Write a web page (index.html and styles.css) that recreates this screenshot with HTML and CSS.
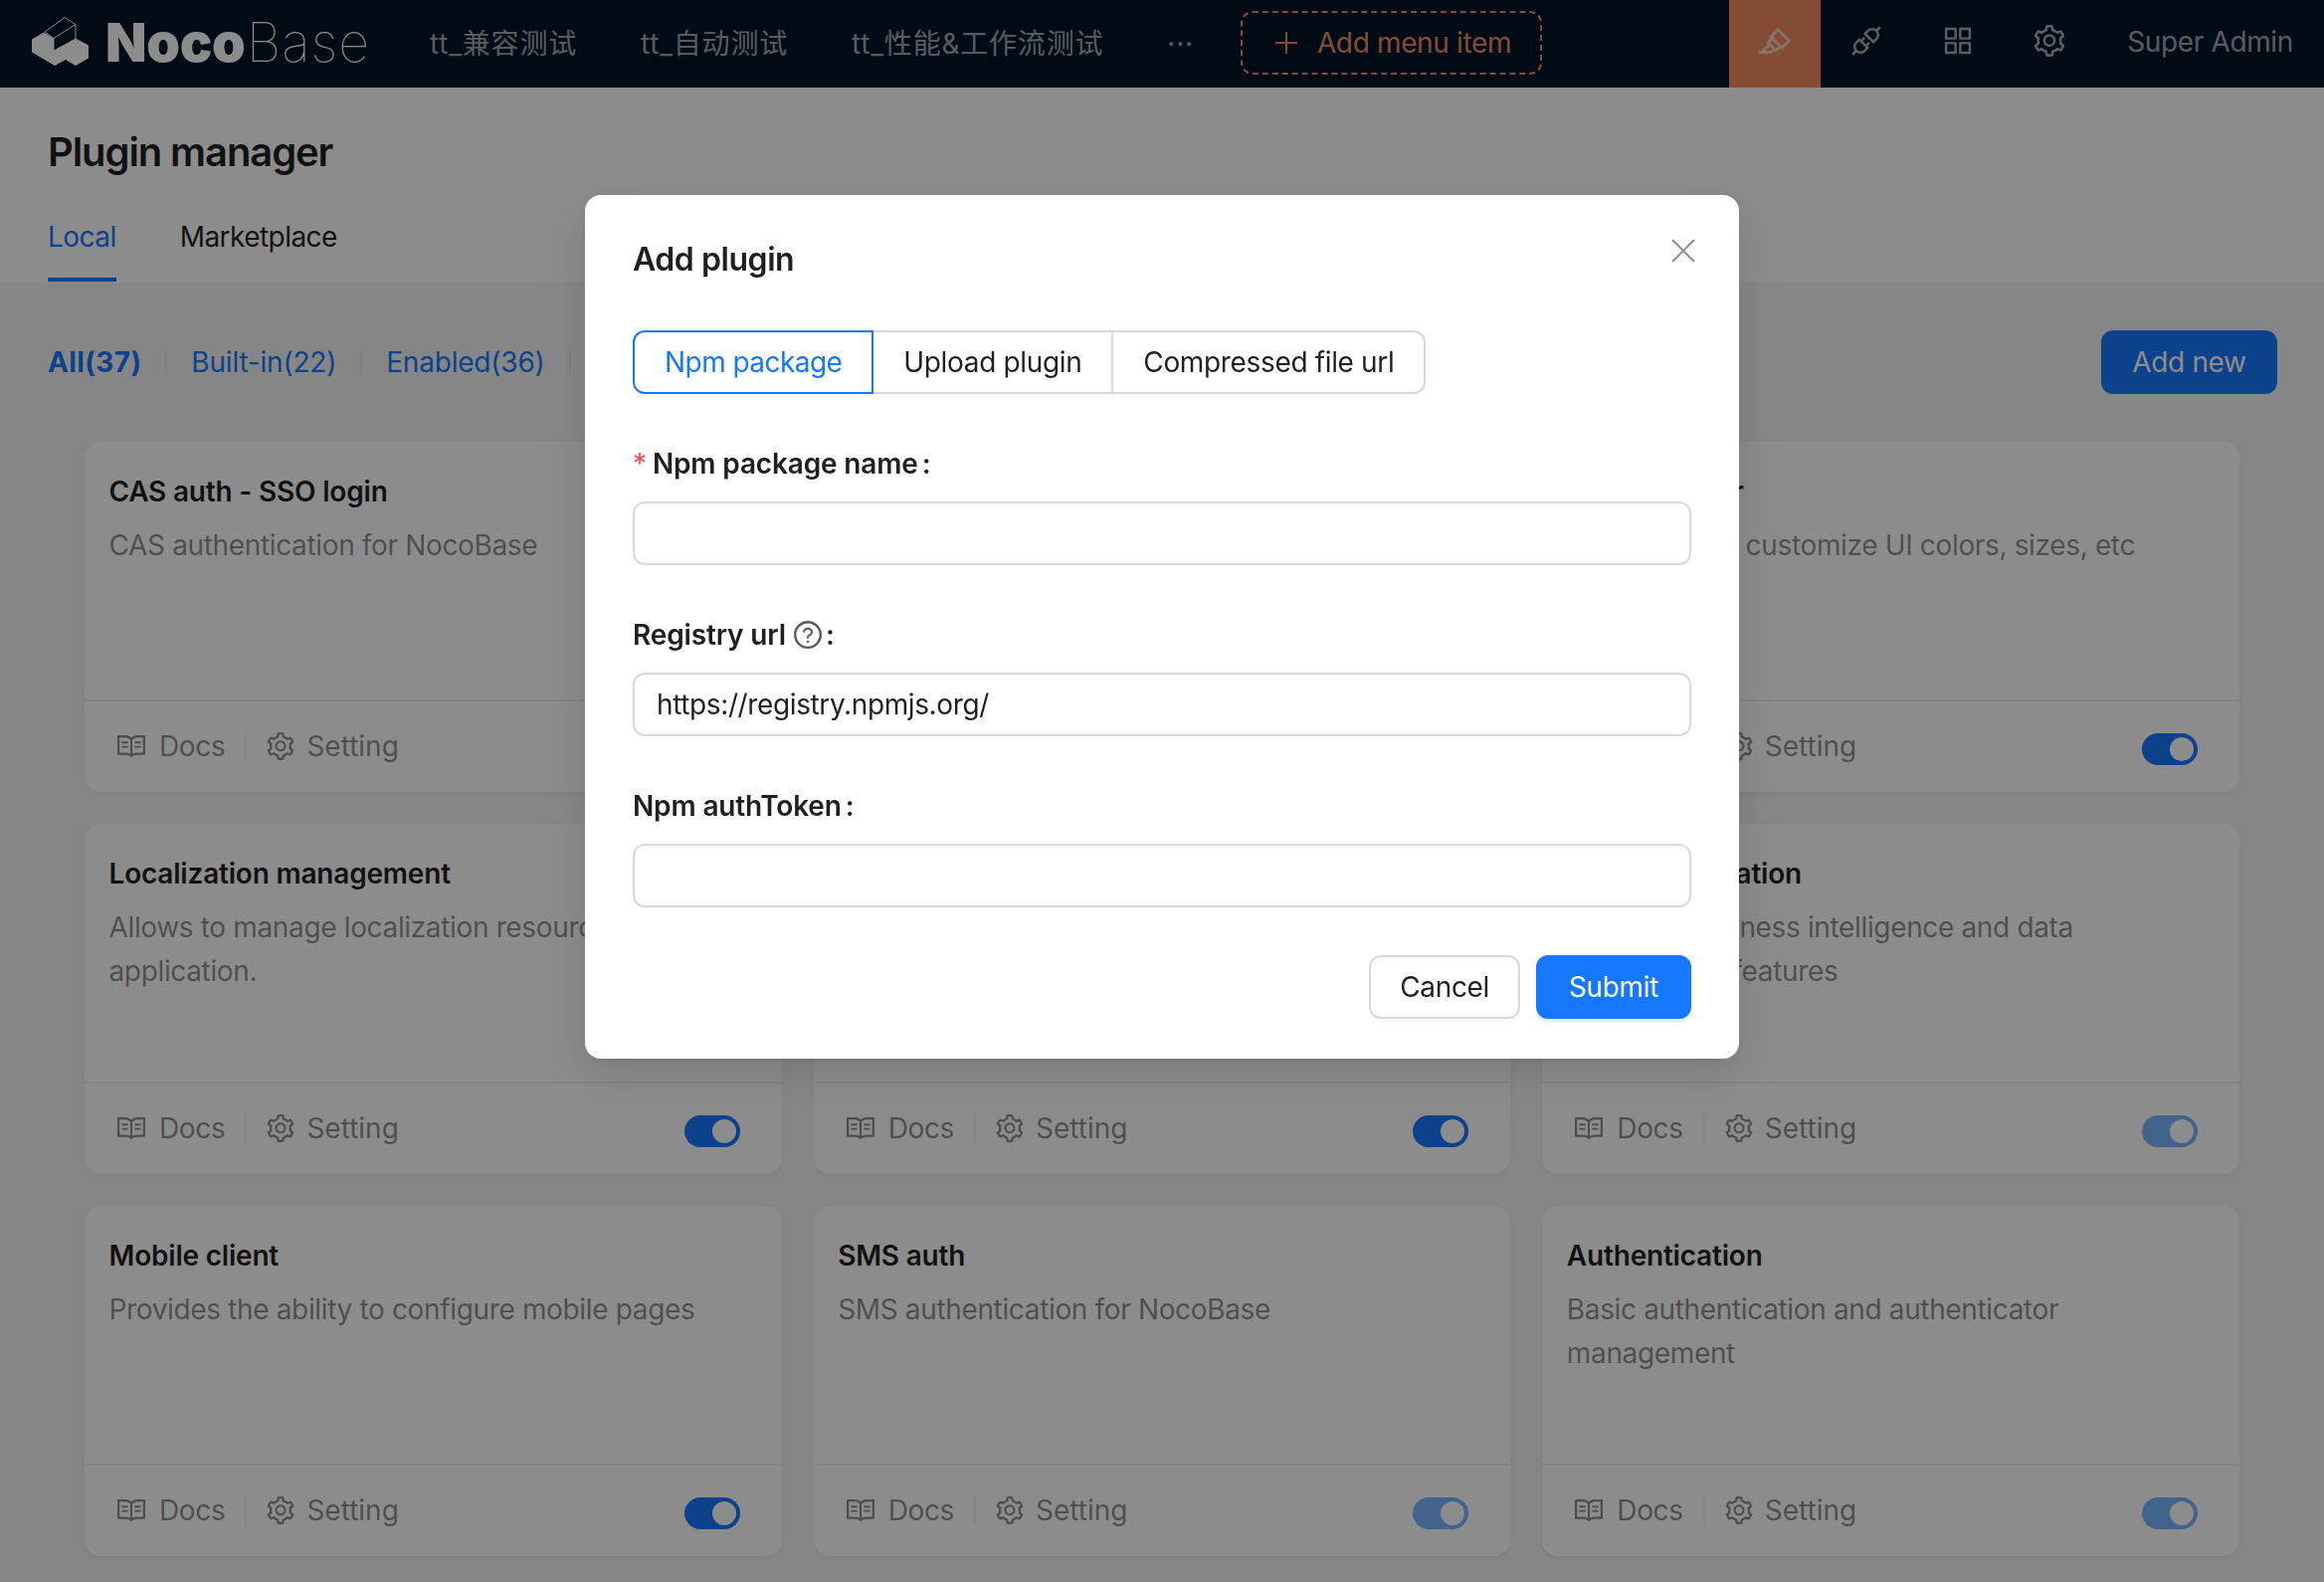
FILE: index.html
```html
<!DOCTYPE html>
<html lang="en">
<head>
  <meta charset="UTF-8" />
  <title>Plugin manager</title>
  <link rel="stylesheet" href="styles.css">
</head>
<body>
  <!-- Shared icons -->
  <svg class="sprite" xmlns="http://www.w3.org/2000/svg">
    <symbol id="i-read" viewBox="64 64 896 896"><path d="M928 161H699.2c-49.1 0-97.1 14.1-138.4 40.7L512 233l-48.8-31.3A255.2 255.2 0 0 0 324.8 161H96c-17.7 0-32 14.3-32 32v568c0 17.7 14.3 32 32 32h228.8c49.1 0 97.1 14.1 138.4 40.7l44.4 28.6c1.3.8 2.8 1.3 4.3 1.3s3-.4 4.3-1.3l44.4-28.6C602 807.1 650.1 793 699.2 793H928c17.7 0 32-14.3 32-32V193c0-17.7-14.3-32-32-32zM324.8 721H136V233h188.8c35.4 0 69.8 10.1 99.5 29.2l48.8 31.3 6.9 4.5v462c-47.6-25.6-100.8-39-155.2-39zm563.2 0H699.2c-54.4 0-107.6 13.4-155.2 39V298l6.9-4.5 48.8-31.3c29.7-19.1 64.1-29.2 99.5-29.2H888v488zM396.9 361H211.1c-3.9 0-7.1 3.4-7.1 7.5v45c0 4.1 3.2 7.5 7.1 7.5h185.7c3.9 0 7.1-3.4 7.1-7.5v-45c.1-4.1-3.1-7.5-7-7.5zm223.1 7.5v45c0 4.1 3.2 7.5 7.1 7.5h185.7c3.9 0 7.1-3.4 7.1-7.5v-45c0-4.1-3.2-7.5-7.1-7.5H627.1c-3.9 0-7.1 3.4-7.1 7.5zM396.9 501H211.1c-3.9 0-7.1 3.4-7.1 7.5v45c0 4.1 3.2 7.5 7.1 7.5h185.7c3.9 0 7.1-3.4 7.1-7.5v-45c.1-4.1-3.1-7.5-7-7.5zm416 0H627.1c-3.9 0-7.1 3.4-7.1 7.5v45c0 4.1 3.2 7.5 7.1 7.5h185.7c3.9 0 7.1-3.4 7.1-7.5v-45c.1-4.1-3.1-7.5-7-7.5z"/></symbol>
    <symbol id="i-setting" viewBox="64 64 896 896"><path d="M924.8 625.7l-65.5-56c3.1-19 4.7-38.4 4.7-57.8s-1.6-38.8-4.7-57.8l65.5-56a32.03 32.03 0 0 0 9.3-35.2l-.9-2.6a443.74 443.74 0 0 0-79.7-137.9l-1.8-2.1a32.12 32.12 0 0 0-35.1-9.5l-81.3 28.9c-30-24.6-63.5-44-99.7-57.6l-15.7-85a32.05 32.05 0 0 0-25.8-25.7l-2.7-.5c-52.1-9.4-106.9-9.4-159 0l-2.7.5a32.05 32.05 0 0 0-25.8 25.7l-15.8 85.4a351.86 351.86 0 0 0-99 57.4l-81.9-29.1a32 32 0 0 0-35.1 9.5l-1.8 2.1a446.02 446.02 0 0 0-79.7 137.9l-.9 2.6c-4.5 12.5-.8 26.5 9.3 35.2l66.3 56.6c-3.1 18.8-4.6 38-4.6 57.1 0 19.2 1.5 38.4 4.6 57.1L99 625.5a32.03 32.03 0 0 0-9.3 35.2l.9 2.6c18.1 50.4 44.9 96.9 79.7 137.9l1.8 2.1a32.12 32.12 0 0 0 35.1 9.5l81.9-29.1c29.8 24.5 63.1 43.9 99 57.4l15.8 85.4a32.05 32.05 0 0 0 25.8 25.7l2.7.5a449.4 449.4 0 0 0 159 0l2.7-.5a32.05 32.05 0 0 0 25.8-25.7l15.7-85a350 350 0 0 0 99.7-57.6l81.3 28.9a32 32 0 0 0 35.1-9.5l1.8-2.1c34.8-41.1 61.6-87.5 79.7-137.9l.9-2.6c4.5-12.3.8-26.3-9.3-35zM788.3 465.9c2.5 15.1 3.8 30.6 3.8 46.1s-1.3 31-3.8 46.1l-6.6 40.1 74.7 63.9a370.03 370.03 0 0 1-42.6 73.6L721 702.8l-31.4 25.8c-23.9 19.6-50.5 35-79.3 45.8l-38.1 14.3-17.9 97a377.5 377.5 0 0 1-85 0l-17.9-97.2-37.8-14.5c-28.5-10.8-55-26.2-78.7-45.7l-31.4-25.9-93.4 33.2c-17-22.9-31.2-47.6-42.6-73.6l75.5-64.5-6.5-40c-2.4-14.9-3.7-30.3-3.7-45.5 0-15.3 1.2-30.6 3.7-45.5l6.5-40-75.5-64.5c11.3-26.1 25.6-50.7 42.6-73.6l93.4 33.2 31.4-25.9c23.7-19.5 50.2-34.9 78.7-45.7l37.9-14.3 17.9-97.2c28.1-3.2 56.8-3.2 85 0l17.9 97 38.1 14.3c28.7 10.8 55.4 26.2 79.3 45.8l31.4 25.8 92.8-32.9c17 22.9 31.2 47.6 42.6 73.6L781.8 426l6.5 39.9zM512 326c-97.2 0-176 78.8-176 176s78.8 176 176 176 176-78.8 176-176-78.8-176-176-176zm79.2 255.2A111.6 111.6 0 0 1 512 614c-29.9 0-58-11.7-79.2-32.8A111.6 111.6 0 0 1 400 502c0-29.9 11.7-58 32.8-79.2C454 401.6 482.1 390 512 390c29.9 0 58 11.6 79.2 32.8A111.6 111.6 0 0 1 624 502c0 29.9-11.7 58-32.8 79.2z"/></symbol>
    <symbol id="i-api" viewBox="64 64 896 896"><path d="M917.7 148.8l-42.4-42.4c-1.6-1.6-3.6-2.3-5.7-2.3s-4.1.8-5.7 2.3l-76.1 76.1a199.27 199.27 0 0 0-112.1-34.3c-51.2 0-102.4 19.5-141.5 58.6L432.3 308.7a8.03 8.03 0 0 0 0 11.3L704 591.7c1.6 1.6 3.6 2.3 5.7 2.3 2 0 4.1-.8 5.7-2.3l101.9-101.9c68.9-69 77-175.7 24.3-253.5l76.1-76.1c3.1-3.2 3.1-8.3 0-11.4zM769.1 441.7l-59.4 59.4-186.8-186.8 59.4-59.4c24.9-24.9 58.1-38.7 93.4-38.7 35.3 0 68.4 13.7 93.4 38.7 24.9 24.9 38.7 58.1 38.7 93.4 0 35.3-13.8 68.4-38.7 93.4zm-190.2 105a8.03 8.03 0 0 0-11.3 0L501 613.3 410.7 523l66.7-66.7c3.1-3.1 3.1-8.2 0-11.3L441 408.6a8.03 8.03 0 0 0-11.3 0L363 475.3l-43-43a7.85 7.85 0 0 0-5.7-2.3c-2 0-4.1.8-5.7 2.3L206.8 534.2c-68.9 69-77 175.7-24.3 253.5l-76.1 76.1a8.03 8.03 0 0 0 0 11.3l42.4 42.4c1.6 1.6 3.6 2.3 5.7 2.3s4.1-.8 5.7-2.3l76.1-76.1c33.7 22.9 72.9 34.3 112.1 34.3 51.2 0 102.4-19.5 141.5-58.6l101.9-101.9c3.1-3.1 3.1-8.2 0-11.3l-43-43 66.7-66.7c3.1-3.1 3.1-8.2 0-11.3l-36.6-36.2zM441.7 769.1a131.32 131.32 0 0 1-93.4 38.7c-35.3 0-68.4-13.7-93.4-38.7a131.32 131.32 0 0 1-38.7-93.4c0-35.3 13.7-68.4 38.7-93.4l59.4-59.4 186.8 186.8-59.4 59.4z"/></symbol>
    <symbol id="i-apps" viewBox="64 64 896 896"><path d="M464 144H160c-8.8 0-16 7.2-16 16v304c0 8.8 7.2 16 16 16h304c8.8 0 16-7.2 16-16V160c0-8.8-7.2-16-16-16zm-52 268H212V212h200v200zm452-268H560c-8.8 0-16 7.2-16 16v304c0 8.8 7.2 16 16 16h304c8.8 0 16-7.2 16-16V160c0-8.8-7.2-16-16-16zm-52 268H612V212h200v200zM464 544H160c-8.8 0-16 7.2-16 16v304c0 8.8 7.2 16 16 16h304c8.8 0 16-7.2 16-16V560c0-8.8-7.2-16-16-16zm-52 268H212V612h200v200zm452-268H560c-8.8 0-16 7.2-16 16v304c0 8.8 7.2 16 16 16h304c8.8 0 16-7.2 16-16V560c0-8.8-7.2-16-16-16zm-52 268H612V612h200v200z"/></symbol>
    <symbol id="i-highlight" viewBox="64 64 896 896"><path d="M957.6 507.4L603.2 158.2a7.9 7.9 0 0 0-11.2 0L353.3 393.4a8.03 8.03 0 0 0-.1 11.3l.1.1 40 39.4-117.2 115.3a8.03 8.03 0 0 0-.1 11.3l.1.1 39.5 38.9-189.1 187H72.1c-4.4 0-8.1 3.6-8.1 8V860c0 4.4 3.6 8 8 8h344.9c2.1 0 4.1-.8 5.6-2.3l76.1-75.6 40.4 39.8a7.9 7.9 0 0 0 11.2 0l117.1-115.6 40.1 39.5a7.9 7.9 0 0 0 11.2 0l238.7-235.2c3.4-3 3.4-8 .3-11.2zM389.8 796.2H229.6l134.4-133 80.1 78.9-54.3 54.1zm154.8-62.1L373.2 565.2l68.6-67.5 171.4 168.9-68.6 67.5zM713.1 658L450.3 399.1 597.6 254l262.8 259-147.3 145z"/></symbol>
    <symbol id="i-question" viewBox="64 64 896 896"><path d="M512 64C264.6 64 64 264.6 64 512s200.6 448 448 448 448-200.6 448-448S759.4 64 512 64zm0 820c-205.4 0-372-166.6-372-372s166.6-372 372-372 372 166.6 372 372-166.6 372-372 372z"/><path d="M623.6 316.7C593.6 290.4 554 276 512 276s-81.6 14.5-111.6 40.7C369.2 344 352 380.7 352 420v7.6c0 4.4 3.6 8 8 8h48c4.4 0 8-3.6 8-8V420c0-44.1 43.1-80 96-80s96 35.9 96 80c0 31.1-22 59.6-56.1 72.7-21.2 8.1-39.2 22.3-52.1 40.9-13.1 19-19.9 41.8-19.9 64.9V620c0 4.4 3.6 8 8 8h48c4.4 0 8-3.6 8-8v-22.7a48.3 48.3 0 0 1 30.9-44.8c59-22.7 97.1-74.7 97.1-132.5.1-39.3-17.1-76-48.3-103.3zM472 732a40 40 0 1 0 80 0 40 40 0 1 0-80 0z"/></symbol>
  </svg>

  <!-- Top bar -->
  <header class="topbar">
    <div class="logo">
      <svg class="logo-mark" viewBox="0 0 60 52" xmlns="http://www.w3.org/2000/svg">
        <path class="mark-solid" d="M0 24.500 L12 17.500 L22 23.500 V35.500 L44 23.500 L57 30.500 V43.500 L44 51 L34 45 L23 51 L0 37.500 Z"/>
        <path class="mark-line" d="M13 17 L33 2.500 L44 9.500 L22 23.500 Z M22 23.500 V35.500 M44 9.500 V23.500"/>
      </svg>
      <span class="logo-noco">Noco</span><span class="logo-base">Base</span>
    </div>
    <nav class="menu">
      <a class="menu-item">tt_兼容测试</a>
      <a class="menu-item">tt_自动测试</a>
      <a class="menu-item">tt_性能&amp;工作流测试</a>
      <a class="menu-item">···</a>
    </nav>
    <button class="add-menu">
      <svg class="plus" viewBox="0 0 24 24"><path d="M12 1V23M1 12H23"/></svg>
      Add menu item
    </button>
    <div class="tools">
      <span class="tool tool-active"><svg class="icon"><use href="#i-highlight"/></svg></span>
      <span class="tool"><svg class="icon"><use href="#i-api"/></svg></span>
      <span class="tool"><svg class="icon"><use href="#i-apps"/></svg></span>
      <span class="tool"><svg class="icon"><use href="#i-setting"/></svg></span>
      <span class="user">Super Admin</span>
    </div>
  </header>

  <!-- Page title and tabs -->
  <section class="page-head">
    <h1>Plugin manager</h1>
    <div class="tabs">
      <a class="tab tab-active">Local</a>
      <a class="tab">Marketplace</a>
    </div>
  </section>

  <main class="content">
    <div class="filters">
      <a class="filter filter-active">All(37)</a>
      <a class="filter">Built-in(22)</a>
      <a class="filter">Enabled(36)</a>
      <button class="add-new">Add new</button>
    </div>

    <div class="grid">
      <article class="card">
        <div class="card-body">
          <h3>CAS auth - SSO login</h3>
          <p>CAS authentication for NocoBase</p>
        </div>
        <div class="card-foot">
          <a class="link"><svg class="icon"><use href="#i-read"/></svg>Docs</a><i class="sep"></i>
          <a class="link"><svg class="icon"><use href="#i-setting"/></svg>Setting</a>
          <span class="switch"></span>
        </div>
      </article>
      <!-- fully behind the dialog -->
      <article class="card">
        <div class="card-body"></div>
        <div class="card-foot"></div>
      </article>
      <article class="card">
        <div class="card-body">
          <h3>Theme editor</h3>
          <p>Allows you to customize UI colors, sizes, etc</p>
        </div>
        <div class="card-foot">
          <a class="link"><svg class="icon"><use href="#i-read"/></svg>Docs</a><i class="sep"></i>
          <a class="link"><svg class="icon"><use href="#i-setting"/></svg>Setting</a>
          <span class="switch"></span>
        </div>
      </article>

      <article class="card">
        <div class="card-body">
          <h3>Localization management</h3>
          <p>Allows to manage localization resources of the application.</p>
        </div>
        <div class="card-foot">
          <a class="link"><svg class="icon"><use href="#i-read"/></svg>Docs</a><i class="sep"></i>
          <a class="link"><svg class="icon"><use href="#i-setting"/></svg>Setting</a>
          <span class="switch"></span>
        </div>
      </article>
      <article class="card">
        <div class="card-body"></div>
        <div class="card-foot">
          <a class="link"><svg class="icon"><use href="#i-read"/></svg>Docs</a><i class="sep"></i>
          <a class="link"><svg class="icon"><use href="#i-setting"/></svg>Setting</a>
          <span class="switch"></span>
        </div>
      </article>
      <article class="card">
        <div class="card-body">
          <h3>Data visualization</h3>
          <p>Provides business intelligence and data visualization features</p>
        </div>
        <div class="card-foot">
          <a class="link"><svg class="icon"><use href="#i-read"/></svg>Docs</a><i class="sep"></i>
          <a class="link"><svg class="icon"><use href="#i-setting"/></svg>Setting</a>
          <span class="switch switch-fading"></span>
        </div>
      </article>

      <article class="card">
        <div class="card-body">
          <h3>Mobile client</h3>
          <p>Provides the ability to configure mobile pages</p>
        </div>
        <div class="card-foot">
          <a class="link"><svg class="icon"><use href="#i-read"/></svg>Docs</a><i class="sep"></i>
          <a class="link"><svg class="icon"><use href="#i-setting"/></svg>Setting</a>
          <span class="switch"></span>
        </div>
      </article>
      <article class="card">
        <div class="card-body">
          <h3>SMS auth</h3>
          <p>SMS authentication for NocoBase</p>
        </div>
        <div class="card-foot">
          <a class="link"><svg class="icon"><use href="#i-read"/></svg>Docs</a><i class="sep"></i>
          <a class="link"><svg class="icon"><use href="#i-setting"/></svg>Setting</a>
          <span class="switch switch-fading"></span>
        </div>
      </article>
      <article class="card">
        <div class="card-body">
          <h3>Authentication</h3>
          <p>Basic authentication and authenticator management</p>
        </div>
        <div class="card-foot">
          <a class="link"><svg class="icon"><use href="#i-read"/></svg>Docs</a><i class="sep"></i>
          <a class="link"><svg class="icon"><use href="#i-setting"/></svg>Setting</a>
          <span class="switch switch-fading"></span>
        </div>
      </article>
    </div>
  </main>

  <!-- Add plugin dialog, over a dimmed page -->
  <div class="mask">
    <div class="modal">
      <svg class="close" viewBox="0 0 24 24"><path d="M1 1L23 23M23 1L1 23"/></svg>
      <h2>Add plugin</h2>
      <div class="radio-group">
        <span class="radio radio-on">Npm package</span>
        <span class="radio">Upload plugin</span>
        <span class="radio">Compressed file url</span>
      </div>
      <div class="field">
        <label><span class="req">*</span>Npm package name<span class="colon">:</span></label>
        <input type="text">
      </div>
      <div class="field">
        <label>Registry url<svg class="icon help"><use href="#i-question"/></svg><span class="colon">:</span></label>
        <input type="text" value="https://registry.npmjs.org/">
      </div>
      <div class="field">
        <label>Npm authToken<span class="colon">:</span></label>
        <input type="text">
      </div>
      <div class="modal-foot">
        <button class="btn">Cancel</button>
        <button class="btn btn-primary">Submit</button>
      </div>
    </div>
  </div>
</body>
</html>
```

FILE: styles.css
```css
* {
  box-sizing: border-box;
}
html, body {
  height: 100%;
}
body {
  margin: 0;
  overflow: hidden;
  background-color: #f5f5f5;
  color: rgba(0, 0, 0, 0.88);
  font-family: Inter, "Noto Sans CJK SC", sans-serif;
  font-size: 28px;
  line-height: 44px;
  letter-spacing: -0.35px;
}
.sprite {
  display: none;
}
.icon {
  width: 28px;
  height: 28px;
  fill: currentColor;
  flex: none;
}

/* Top bar */
.topbar {
  display: flex;
  align-items: center;
  height: 88px;
  background-color: #001529;
}
.logo {
  display: flex;
  align-items: center;
  width: 400px;
  padding: 0 0 2px 32px;
  color: #fff;
  line-height: 86px;
}
.logo-mark {
  width: 60px;
  height: 52px;
  margin: 0 14px 4px 0;
  flex: none;
}
.mark-solid {
  fill: #fff;
}
.mark-line {
  fill: none;
  stroke: #fff;
  stroke-width: 1;
}
.logo-noco {
  font-size: 54px;
  font-weight: 900;
  letter-spacing: -0.25px;
}
.logo-base {
  margin-left: 1px;
  font-size: 54px;
  font-weight: 100;
  letter-spacing: 1px;
}
.menu {
  display: flex;
}
.menu-item {
  padding: 0 32px;
  color: rgba(255, 255, 255, 0.65);
  letter-spacing: 0.8px;
  line-height: 78px;
}
.add-menu {
  display: flex;
  align-items: center;
  width: 303px;
  height: 64px;
  margin: 0 0 3px 15px;
  padding: 0 0 0 32px;
  background: none;
  border: 2px dashed #f18b62;
  border-radius: 12px;
  color: #f18b62;
  font: inherit;
  letter-spacing: inherit;
}
.plus {
  width: 24px;
  height: 24px;
  margin-right: 19px;
  fill: none;
  stroke: #f18b62;
  stroke-width: 2;
}
.tools {
  display: flex;
  align-items: center;
  height: 88px;
  margin-left: auto;
  color: rgba(255, 255, 255, 0.65);
}
.tool {
  display: flex;
  align-items: center;
  justify-content: center;
  width: 92px;
  height: 88px;
}
.tool .icon {
  width: 32px;
  height: 32px;
  margin-top: -6px;
}
.tool-active {
  background-color: #f18b62;
}
.user {
  padding: 0 31px 4px 32px;
}

/* Page title and tabs */
.page-head {
  height: 196px;
  padding: 37px 48px 0;
  background-color: #fff;
}
.page-head h1 {
  margin: 0;
  font-size: 40px;
  font-weight: 600;
  line-height: 56px;
  letter-spacing: -1.1px;
}
.tabs {
  display: flex;
  gap: 64px;
  margin-top: 11px;
}
.tab {
  padding: 24px 0 19px;
  border-bottom: 4px solid transparent;
  letter-spacing: -0.55px;
}
.tab-active {
  color: #1677ff;
  border-bottom-color: #1677ff;
}

/* Filter row */
.filters {
  display: flex;
  align-items: center;
  padding: 48px 47px 48px 48px;
}
.filter {
  padding-right: 24px;
  margin-right: 24px;
  border-right: 2px solid rgba(5, 5, 5, 0.06);
  color: #1677ff;
  line-height: 24px;
  letter-spacing: -0.2px;
}
.filter-active {
  font-weight: 700;
  letter-spacing: 0.4px;
}
.add-new {
  width: 177px;
  height: 64px;
  margin-left: auto;
  background-color: #1677ff;
  border: none;
  border-radius: 12px;
  color: #fff;
  font: inherit;
  letter-spacing: inherit;
}

/* Plugin cards */
.grid {
  display: grid;
  grid-template-columns: repeat(3, 1fr);
  grid-auto-rows: 352px;
  gap: 32px;
  padding: 0 85px;
}
.card {
  display: flex;
  flex-direction: column;
  background-color: #fff;
  border-radius: 16px;
  box-shadow: 0 2px 4px rgba(0, 0, 0, 0.03), 0 2px 12px rgba(0, 0, 0, 0.03);
}
.card-body {
  flex: 1;
  padding: 28px 24px 0 24.5px;
  border-bottom: 2px solid #f0f0f0;
}
.card-body h3 {
  margin: 0 0 10px;
  font-size: 28px;
  font-weight: 600;
  line-height: 44px;
  letter-spacing: -0.2px;
}
.card-body p {
  margin: 0;
  color: rgba(0, 0, 0, 0.45);
}
.card-foot {
  display: flex;
  align-items: center;
  height: 91px;
  padding: 0 42px 1px 33px;
  color: rgba(0, 0, 0, 0.45);
}
.link {
  display: flex;
  align-items: center;
  gap: 14px;
}
.sep + .link {
  gap: 12px;
  letter-spacing: 0;
}
.sep {
  width: 2px;
  height: 28px;
  margin: 0 20px;
  background-color: rgba(5, 5, 5, 0.06);
}
.switch {
  position: relative;
  width: 56px;
  height: 32px;
  margin: 5px 0 0 auto;
  background-color: #1677ff;
  border-radius: 16px;
}
.switch::after {
  content: "";
  position: absolute;
  top: 4px;
  right: 4px;
  width: 24px;
  height: 24px;
  background-color: #fff;
  border-radius: 50%;
}
.switch-fading {
  background-color: #78b4ff;
}

/* Dialog */
.mask {
  position: fixed;
  top: 0;
  right: 0;
  bottom: 0;
  left: 0;
  display: flex;
  justify-content: center;
  align-items: flex-start;
  padding-top: 196px;
  background-color: rgba(0, 0, 0, 0.45);
}
.modal {
  position: relative;
  width: 1160px;
  padding: 40px 48px;
  background-color: #fff;
  border-radius: 16px;
  box-shadow: 0 12px 32px rgba(0, 0, 0, 0.08), 0 6px 12px -8px rgba(0, 0, 0, 0.12), 0 18px 56px 16px rgba(0, 0, 0, 0.05);
}
.close {
  position: absolute;
  top: 44px;
  right: 44px;
  width: 24px;
  height: 24px;
  fill: none;
  stroke: rgba(0, 0, 0, 0.45);
  stroke-width: 2;
}
.modal h2 {
  margin: 1px 0 47px;
  font-size: 32px;
  font-weight: 600;
  line-height: 48px;
  letter-spacing: -0.45px;
}
.radio-group {
  display: flex;
}
.radio {
  height: 64px;
  padding: 0 30px;
  border: 2px solid #d9d9d9;
  border-left-width: 0;
  line-height: 60px;
}
.radio:last-child {
  border-radius: 0 12px 12px 0;
}
.radio-on {
  border: 2px solid #1677ff;
  border-radius: 12px 0 0 12px;
  color: #1677ff;
  letter-spacing: -0.55px;
}
.field {
  margin-top: 48px;
}
.field label {
  display: flex;
  align-items: center;
  height: 44px;
  margin-bottom: 16px;
  font-weight: 600;
  letter-spacing: -0.15px;
}
.req {
  margin-right: 6px;
  color: #ff4d4f;
  font-weight: 400;
}
.colon {
  margin-left: 4px;
}
.help {
  width: 28px;
  height: 28px;
  margin-left: 8px;
  fill: rgba(0, 0, 0, 0.65);
}
.field input {
  display: block;
  width: 100%;
  height: 64px;
  padding: 0 22px;
  border: 2px solid #d9d9d9;
  border-radius: 12px;
  color: rgba(0, 0, 0, 0.88);
  font: inherit;
  letter-spacing: -0.38px;
  outline: none;
}
.modal-foot {
  display: flex;
  justify-content: flex-end;
  gap: 16px;
  margin-top: 48px;
}
.btn {
  height: 64px;
  padding: 0 29px;
  background-color: #fff;
  border: 2px solid #d9d9d9;
  border-radius: 12px;
  box-shadow: 0 4px 0 rgba(0, 0, 0, 0.02);
  color: rgba(0, 0, 0, 0.88);
  font: inherit;
  letter-spacing: inherit;
}
.btn-primary {
  padding: 0 31px;
  background-color: #1677ff;
  border-color: #1677ff;
  box-shadow: 0 4px 0 rgba(5, 145, 255, 0.1);
  color: #fff;
}
```
